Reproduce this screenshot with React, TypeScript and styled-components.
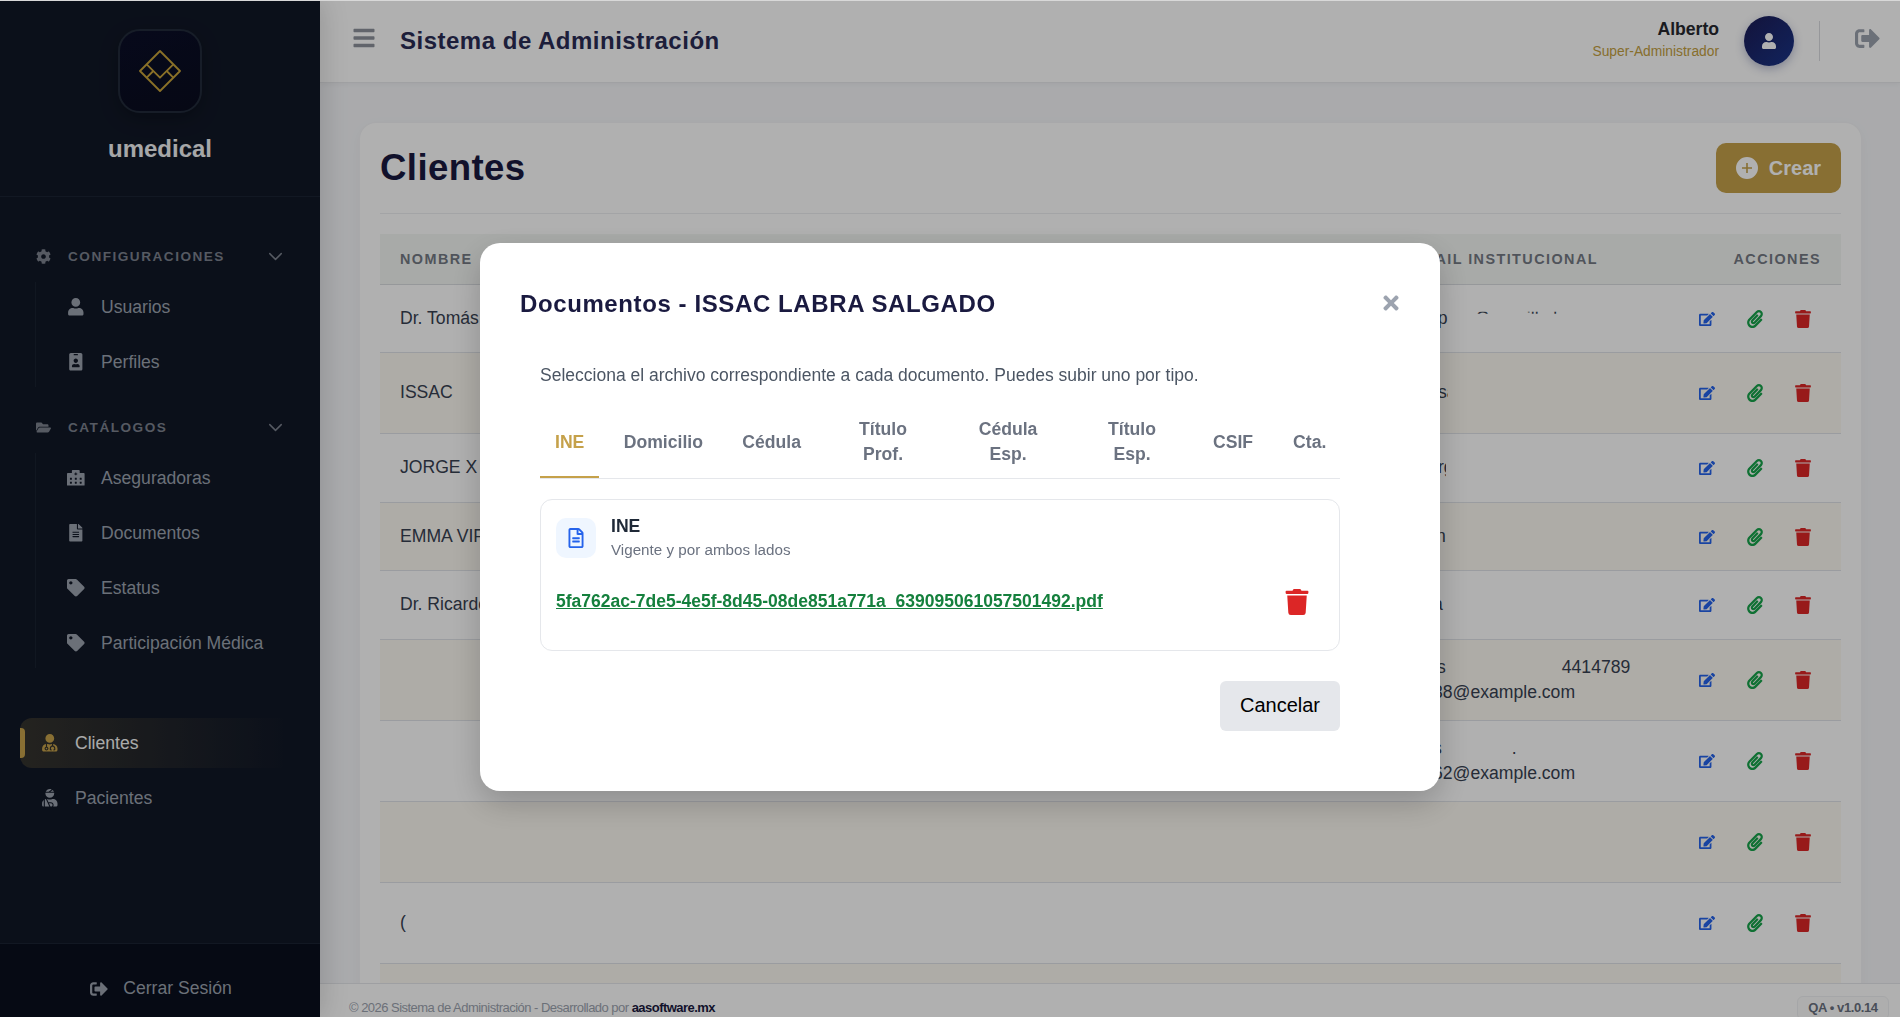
import React from "react";
import styled, { createGlobalStyle } from "styled-components";
import {
  FaBars, FaCog, FaEdit, FaFileAlt, FaFolderOpen, FaHospitalAlt, FaIdBadge, FaPaperclip,
  FaRegFileAlt, FaSignOutAlt, FaTag, FaTimes, FaTrash, FaUser, FaUserInjured, FaUserMd,
} from "react-icons/fa";
import { ChevronDown } from "lucide-react";

const GOLD = "#c5a14a";

const Global = createGlobalStyle`
  html, body { margin: 0; padding: 0; height: 100%; background: #d8d8d8; overflow: hidden; }
  body { font-family: "Liberation Sans", Arial, sans-serif; font-size: 17.6px; }
  * { box-sizing: border-box; }
  #root { padding-top: 1px; height: 100%; }
`;

const Shell = styled.div`
  display: flex;
  height: 1016px;
  overflow: hidden;
  background: #f6f7fa;
`;

/* Sidebar */
const Sidebar = styled.aside`
  width: 320px;
  flex: none;
  display: flex;
  flex-direction: column;
  background: #111827;
  box-shadow: 4px 0 24px rgba(0, 0, 0, 0.14);
  z-index: 2;
`;
const Brand = styled.div`
  height: 196px;
  flex: none;
  display: flex;
  flex-direction: column;
  align-items: center;
  padding-top: 28px;
  border-bottom: 1px solid #1b2433;
`;
const LogoBox = styled.div`
  width: 84px;
  height: 84px;
  display: flex;
  align-items: center;
  justify-content: center;
  border-radius: 22px;
  border: 2px solid #222b3a;
  background: linear-gradient(160deg, #0b0e28, #090d1e);
  box-shadow: 0 6px 18px rgba(0, 0, 0, 0.25);
`;
const BrandName = styled.div`
  margin-top: 21px;
  font-size: 24px;
  line-height: 30px;
  font-weight: 700;
  color: #f1f2f4;
`;
const Nav = styled.nav`
  flex: 1;
  padding-top: 44px;
`;
const SectionHead = styled.div<{ $top?: number }>`
  height: 30px;
  margin-top: ${(p) => p.$top ?? 0}px;
  margin-bottom: 11px;
  padding: 0 33px 0 36px;
  display: flex;
  align-items: center;
  color: #7d838f;
  font-size: 13.6px;
  font-weight: 700;
  letter-spacing: 1.5px;
`;
const SectionIcon = styled.span`
  width: 15px;
  margin-right: 17px;
  display: flex;
  font-size: 15px;
`;
const SectionLabel = styled.span`
  flex: 1;
`;
const Group = styled.div`
  margin-left: 35px;
  border-left: 1px solid #1a2230;
  display: flex;
  flex-direction: column;
  gap: 5px;
`;
const SubItem = styled.div`
  height: 50px;
  display: flex;
  align-items: center;
  padding-left: 25px;
  color: #9ca3af;
  font-size: 17.6px;
`;
const ItemIcon = styled.span`
  width: 30px;
  margin-right: 10px;
  display: flex;
  justify-content: center;
  font-size: 17.6px;
`;
const TopList = styled.div`
  margin-top: 50px;
  display: flex;
  flex-direction: column;
  gap: 5px;
`;
const TopItem = styled.div<{ $active?: boolean }>`
  position: relative;
  height: 50px;
  margin: 0 20px;
  padding-left: 15px;
  display: flex;
  align-items: center;
  border-radius: 12px;
  color: ${(p) => (p.$active ? "#f6f6f6" : "#9ca3af")};
  background: ${(p) =>
    p.$active ? "linear-gradient(90deg, rgba(197,161,74,.2), rgba(197,161,74,0) 95%)" : "transparent"};
  ${ItemIcon} { color: ${(p) => (p.$active ? GOLD : "#9ca3af")}; }
`;
const ActiveBar = styled.span`
  position: absolute;
  left: 0;
  top: 10px;
  width: 5px;
  height: 30px;
  border-radius: 0 4px 4px 0;
  background: ${GOLD};
`;
const SideFoot = styled.div`
  height: 74px;
  flex: none;
  display: flex;
  align-items: center;
  justify-content: center;
  gap: 15px;
  border-top: 1px solid #1b2433;
  background: #090f1d;
  color: #9ca3af;
  font-size: 17.6px;
  padding: 16px 0 0 2px;
`;
const SideFootIcon = styled.span`
  display: flex;
  font-size: 18px;
`;

/* Main */
const Main = styled.main`
  flex: 1;
  min-width: 0;
  display: flex;
  flex-direction: column;
`;
const TopBar = styled.header`
  height: 82px;
  flex: none;
  display: flex;
  align-items: center;
  padding: 0 20px 2px 32px;
  background: #fff;
  border-bottom: 1px solid #e8e9ec;
  box-shadow: 0 1px 6px rgba(0, 0, 0, 0.05);
`;
const Burger = styled.span`
  display: flex;
  color: #8d929c;
  font-size: 24px;
  margin: -5px 24px 0 0;
`;
const AppTitle = styled.h1`
  flex: 1;
  margin: 0;
  font-size: 24px;
  font-weight: 700;
  letter-spacing: 0.5px;
  color: #2a2c55;
`;
const UserBox = styled.div`
  text-align: right;
  margin: -1.6px 25px 0 0;
`;
const UserName = styled.div`
  font-size: 17.6px;
  line-height: 22px;
  font-weight: 700;
  color: #26282f;
`;
const UserRole = styled.div`
  margin-top: 2.4px;
  font-size: 13.8px;
  line-height: 20px;
  color: #c4a041;
`;
const Avatar = styled.div`
  width: 50px;
  height: 50px;
  border-radius: 50%;
  display: flex;
  align-items: center;
  justify-content: center;
  color: #fff;
  font-size: 16px;
  background: linear-gradient(135deg, #1c1c55, #1a3488);
  box-shadow: 0 3px 10px rgba(26, 40, 110, 0.3);
`;
const VDivider = styled.span`
  width: 1px;
  height: 40px;
  margin: 0 35px 0 25px;
  background: #d9dbe0;
`;
const HeadLogout = styled.span`
  display: flex;
  color: #9ca3af;
  font-size: 25px;
  margin-top: -5px;
`;
const Content = styled.div`
  flex: 1;
  min-height: 0;
  overflow: hidden;
  padding: 40px 39px 0 40px;
`;
const Card = styled.section`
  background: #fff;
  border-radius: 16px 16px 0 0;
  padding: 20px 20px 0;
  min-height: 100%;
  box-shadow: 0 0 0 1px #f3f4f6, 0 4px 16px rgba(0, 0, 0, 0.04);
`;
const CardHead = styled.div`
  display: flex;
  justify-content: space-between;
  align-items: center;
  padding-bottom: 20px;
  border-bottom: 1px solid #eceef1;
  margin-bottom: 20px;
`;
const PageTitle = styled.h2`
  margin: 0;
  font-size: 36.6px;
  font-weight: 700;
  letter-spacing: 0.4px;
  color: #1a1a40;
`;
const CreateBtn = styled.button`
  width: 125px;
  height: 50px;
  border: 0;
  border-radius: 10px;
  display: flex;
  align-items: center;
  justify-content: center;
  gap: 11px;
  background: ${GOLD};
  color: #fff;
  font: 700 20px "Liberation Sans", Arial, sans-serif;
`;
const Table = styled.table`
  width: 100%;
  table-layout: fixed;
  border-collapse: collapse;
`;
const Th = styled.th<{ $w?: number; $right?: boolean; $pl?: number }>`
  width: ${(p) => (p.$w ? `${p.$w}px` : "auto")};
  height: 50px;
  padding: 0 20px 0 ${(p) => p.$pl ?? 20}px;
  text-align: ${(p) => (p.$right ? "right" : "left")};
  background: #f4f6f4;
  border-bottom: 1px solid #d9dce0;
  font-size: 14.4px;
  font-weight: 700;
  letter-spacing: 1.44px;
  color: #757a84;
  white-space: nowrap;
`;
const Tr = styled.tr<{ $h: number; $alt?: boolean }>`
  height: ${(p) => p.$h}px;
  background: ${(p) => (p.$alt ? "#fcf9f2" : "#fff")};
  border-bottom: 1px solid #e0e3e8;
`;
const Td = styled.td<{ $right?: boolean }>`
  padding: 1px 20px 0;
  text-align: ${(p) => (p.$right ? "right" : "left")};
  font-size: 17.6px;
  line-height: 25.5px;
  color: #374151;
  white-space: nowrap;
  overflow: hidden;
`;
const Line = styled.span`
  display: block;
  height: 25.5px;
`;
const Frag = styled.span<{ $ml: number; $w?: number }>`
  display: inline-block;
  vertical-align: top;
  margin-left: ${(p) => p.$ml}px;
  ${(p) => (p.$w ? `width: ${p.$w}px; overflow: hidden;` : "")}
`;
const Tips = styled.span`
  display: inline-block;
  vertical-align: top;
  margin-left: 28px;
  height: 8px;
  overflow: hidden;
  clip-path: inset(6px 0 0 0);
`;
const Actions = styled.div`
  display: flex;
  justify-content: flex-end;
  gap: 12px;
`;
const ActionBtn = styled.span<{ $color: string; $size: number }>`
  width: 36px;
  height: 25px;
  display: flex;
  align-items: center;
  justify-content: center;
  color: ${(p) => p.$color};
  font-size: ${(p) => p.$size}px;
`;
const PageFoot = styled.footer`
  height: 34px;
  flex: none;
  display: flex;
  justify-content: space-between;
  padding: 16px 11px 0 29px;
  background: #fff;
  border-top: 1px solid #e5e7eb;
  font-size: 13px;
  letter-spacing: -0.53px;
  color: #9ca3af;
  z-index: 1;
`;
const FootBrand = styled.b`
  color: #1a1a40;
`;
const VersionBadge = styled.span`
  width: 92px;
  height: 24px;
  text-align: center;
  line-height: 21px;
  font-size: 13px;
  font-weight: 700;
  letter-spacing: -0.4px;
  color: #6b7280;
  background: #fdfdfd;
  border: 1px solid #f0f1f3;
  border-radius: 6px;
  margin-top: -4px;
`;

/* Modal */
const Overlay = styled.div`
  position: fixed;
  inset: 1px 0 0 0;
  z-index: 10;
  display: flex;
  justify-content: center;
  align-items: flex-start;
  padding: 242px 0 0 20px;
  background: rgba(0, 0, 0, 0.31);
`;
const Modal = styled.div`
  position: relative;
  width: 960px;
  height: 548px;
  padding: 47px 100px 0 60px;
  border-radius: 20px;
  background: #fff;
  box-shadow: 0 12px 32px rgba(0, 0, 0, 0.2);
`;
const ModalTitle = styled.h3`
  margin: 0 0 45px -20px;
  font-size: 24px;
  line-height: 28px;
  font-weight: 700;
  letter-spacing: 0.6px;
  color: #1a1a40;
`;
const CloseBtn = styled.span`
  position: absolute;
  top: 49px;
  right: 38px;
  display: flex;
  color: #9ca3af;
  font-size: 22px;
`;
const Intro = styled.p`
  margin: 0 0 18px;
  font-size: 17.5px;
  line-height: 25.5px;
  color: #4b5563;
`;
const Tabs = styled.div`
  display: flex;
  gap: 10px;
  height: 72px;
  border-bottom: 1px solid #e5e7eb;
`;
const Tab = styled.div<{ $active?: boolean; $w?: number }>`
  ${(p) => (p.$w ? `width: ${p.$w}px;` : "")}
  flex: none;
  height: 71px;
  padding: 2px 15px 0;
  display: flex;
  align-items: center;
  justify-content: center;
  text-align: center;
  font-size: 17.6px;
  line-height: 25px;
  font-weight: 700;
  color: ${(p) => (p.$active ? GOLD : "#6b7280")};
  border-bottom: 2px solid ${(p) => (p.$active ? GOLD : "transparent")};
`;
const DocCard = styled.div`
  margin-top: 20px;
  height: 152px;
  padding: 16px 15px;
  border: 1px solid #e5e7eb;
  border-radius: 12px;
`;
const DocHead = styled.div`
  display: flex;
  align-items: center;
  gap: 15px;
  margin-bottom: 29px;
`;
const DocTile = styled.span`
  width: 40px;
  height: 40px;
  display: flex;
  align-items: center;
  justify-content: center;
  border-radius: 10px;
  background: #eff6ff;
  color: #2563eb;
  font-size: 20px;
`;
const DocName = styled.div`
  font-size: 17.6px;
  line-height: 20px;
  font-weight: 700;
  color: #1f2937;
  margin-bottom: 4px;
`;
const DocHint = styled.div`
  font-size: 15.2px;
  line-height: 20px;
  color: #6b7280;
`;
const DocRow = styled.div`
  height: 26px;
  display: flex;
  align-items: center;
  justify-content: space-between;
  padding-right: 14px;
`;
const DocLink = styled.a`
  font-size: 17.5px;
  font-weight: 700;
  color: #15803d;
  text-decoration: underline;
`;
const DocTrash = styled.span`
  display: flex;
  color: #dc2626;
  font-size: 26px;
`;
const ModalFoot = styled.div`
  display: flex;
  justify-content: flex-end;
  margin-top: 30px;
`;
const CancelBtn = styled.button`
  width: 120px;
  height: 50px;
  border: 0;
  border-radius: 6px;
  background: #e5e7eb;
  color: #000;
  font: 400 20px "Liberation Sans", Arial, sans-serif;
`;

const Logo = () => (
  <svg width="42" height="42" viewBox="-1 -1 42 42" fill="none" stroke="#c9a33a" strokeWidth="1.8" strokeLinejoin="round">
    <path d="M20 0 40 20 20 40 0 20Z" />
    <path d="M6.7 13.3 20 26.7 33.3 13.3" />
    <path d="M13.3 20 6.7 26.7M26.7 20 33.3 26.7" />
  </svg>
);

const PlusDisc = () => (
  <svg width="22" height="22" viewBox="0 0 22 22" aria-hidden="true">
    <path
      fill="#fff"
      fillRule="evenodd"
      d="M11 0a11 11 0 1 1 0 22 11 11 0 0 1 0-22ZM10.2 6v4.2H6v1.6h4.2V16h1.6v-4.2H16v-1.6h-4.2V6Z"
    />
  </svg>
);

type Row = { h: number; alt?: boolean; name?: string; lines?: React.ReactNode[] };
const rows: Row[] = [
  { h: 68, name: "Dr. Tomás", lines: [<><Frag $ml={22} $w={20}>op</Frag><Tips>Casanilla l</Tips></>] },
  { h: 81, alt: true, name: "ISSAC", lines: [<Frag $ml={32} $w={10}>sa</Frag>] },
  { h: 69, name: "JORGE X", lines: [<Frag $ml={32} $w={8}>rg</Frag>] },
  { h: 68, alt: true, name: "EMMA VIF", lines: [<Frag $ml={30}>n</Frag>] },
  { h: 69, name: "Dr. Ricardo", lines: [<Frag $ml={27}>a</Frag>] },
  { h: 81, alt: true, lines: [<><Frag $ml={31}>s</Frag><Frag $ml={116}>4414789</Frag></>, <Frag $ml={27}>38@example.com</Frag>] },
  { h: 81, lines: [<><Frag $ml={27}>s</Frag><Frag $ml={70}>.</Frag></>, <Frag $ml={27}>62@example.com</Frag>] },
  { h: 81, alt: true },
  { h: 81, name: "(" },
  { h: 81, alt: true },
];

const subItemsA = [
  { icon: <FaUser />, label: "Usuarios" },
  { icon: <FaIdBadge />, label: "Perfiles" },
];
const subItemsB = [
  { icon: <FaHospitalAlt />, label: "Aseguradoras" },
  { icon: <FaFileAlt />, label: "Documentos" },
  { icon: <FaTag />, label: "Estatus" },
  { icon: <FaTag />, label: "Participación Médica" },
];

export default function App() {
  return (
    <>
      <Global />
      <Shell>
        <Sidebar>
          <Brand>
            <LogoBox><Logo /></LogoBox>
            <BrandName>umedical</BrandName>
          </Brand>
          <Nav>
            <SectionHead>
              <SectionIcon><FaCog /></SectionIcon>
              <SectionLabel>CONFIGURACIONES</SectionLabel>
              <ChevronDown size={23} strokeWidth={1.5} />
            </SectionHead>
            <Group>
              {subItemsA.map((s) => (
                <SubItem key={s.label}><ItemIcon>{s.icon}</ItemIcon>{s.label}</SubItem>
              ))}
            </Group>
            <SectionHead $top={25}>
              <SectionIcon><FaFolderOpen /></SectionIcon>
              <SectionLabel>CATÁLOGOS</SectionLabel>
              <ChevronDown size={23} strokeWidth={1.5} />
            </SectionHead>
            <Group>
              {subItemsB.map((s) => (
                <SubItem key={s.label}><ItemIcon>{s.icon}</ItemIcon>{s.label}</SubItem>
              ))}
            </Group>
            <TopList>
              <TopItem $active><ActiveBar /><ItemIcon><FaUserMd /></ItemIcon>Clientes</TopItem>
              <TopItem><ItemIcon><FaUserInjured /></ItemIcon>Pacientes</TopItem>
            </TopList>
          </Nav>
          <SideFoot>
            <SideFootIcon><FaSignOutAlt /></SideFootIcon>
            Cerrar Sesión
          </SideFoot>
        </Sidebar>
        <Main>
          <TopBar>
            <Burger><FaBars /></Burger>
            <AppTitle>Sistema de Administración</AppTitle>
            <UserBox>
              <UserName>Alberto</UserName>
              <UserRole>Super-Administrador</UserRole>
            </UserBox>
            <Avatar><FaUser /></Avatar>
            <VDivider />
            <HeadLogout><FaSignOutAlt /></HeadLogout>
          </TopBar>
          <Content>
            <Card>
              <CardHead>
                <PageTitle>Clientes</PageTitle>
                <CreateBtn><PlusDisc />Crear</CreateBtn>
              </CardHead>
              <Table>
                <thead>
                  <tr>
                    <Th>NOMBRE</Th>
                    <Th $w={280} $pl={25}>EMAIL INSTITUCIONAL</Th>
                    <Th $w={175} $right>ACCIONES</Th>
                  </tr>
                </thead>
                <tbody>
                  {rows.map((r, i) => (
                    <Tr key={i} $h={r.h} $alt={r.alt}>
                      <Td>{r.name}</Td>
                      <Td>{r.lines?.map((l, j) => <Line key={j}>{l}</Line>)}</Td>
                      <Td $right>
                        <Actions>
                          <ActionBtn $color="#2563eb" $size={16}><FaEdit /></ActionBtn>
                          <ActionBtn $color="#16a34a" $size={18}><FaPaperclip /></ActionBtn>
                          <ActionBtn $color="#dc2626" $size={18}><FaTrash /></ActionBtn>
                        </Actions>
                      </Td>
                    </Tr>
                  ))}
                </tbody>
              </Table>
            </Card>
          </Content>
          <PageFoot>
            <span>© 2026 Sistema de Administración - Desarrollado por <FootBrand>aasoftware.mx</FootBrand></span>
            <VersionBadge>QA • v1.0.14</VersionBadge>
          </PageFoot>
        </Main>
      </Shell>
      <Overlay>
        <Modal>
          <ModalTitle>Documentos - ISSAC LABRA SALGADO</ModalTitle>
          <CloseBtn><FaTimes /></CloseBtn>
          <Intro>Selecciona el archivo correspondiente a cada documento. Puedes subir uno por tipo.</Intro>
          <Tabs>
            <Tab $active>INE</Tab>
            <Tab $w={108}>Domicilio</Tab>
            <Tab>Cédula</Tab>
            <Tab $w={114}>Título Prof.</Tab>
            <Tab $w={116}>Cédula Esp.</Tab>
            <Tab $w={112}>Título Esp.</Tab>
            <Tab>CSIF</Tab>
            <Tab>Cta.</Tab>
          </Tabs>
          <DocCard>
            <DocHead>
              <DocTile><FaRegFileAlt /></DocTile>
              <div>
                <DocName>INE</DocName>
                <DocHint>Vigente y por ambos lados</DocHint>
              </div>
            </DocHead>
            <DocRow>
              <DocLink>5fa762ac-7de5-4e5f-8d45-08de851a771a_639095061057501492.pdf</DocLink>
              <DocTrash><FaTrash /></DocTrash>
            </DocRow>
          </DocCard>
          <ModalFoot>
            <CancelBtn>Cancelar</CancelBtn>
          </ModalFoot>
        </Modal>
      </Overlay>
    </>
  );
}
